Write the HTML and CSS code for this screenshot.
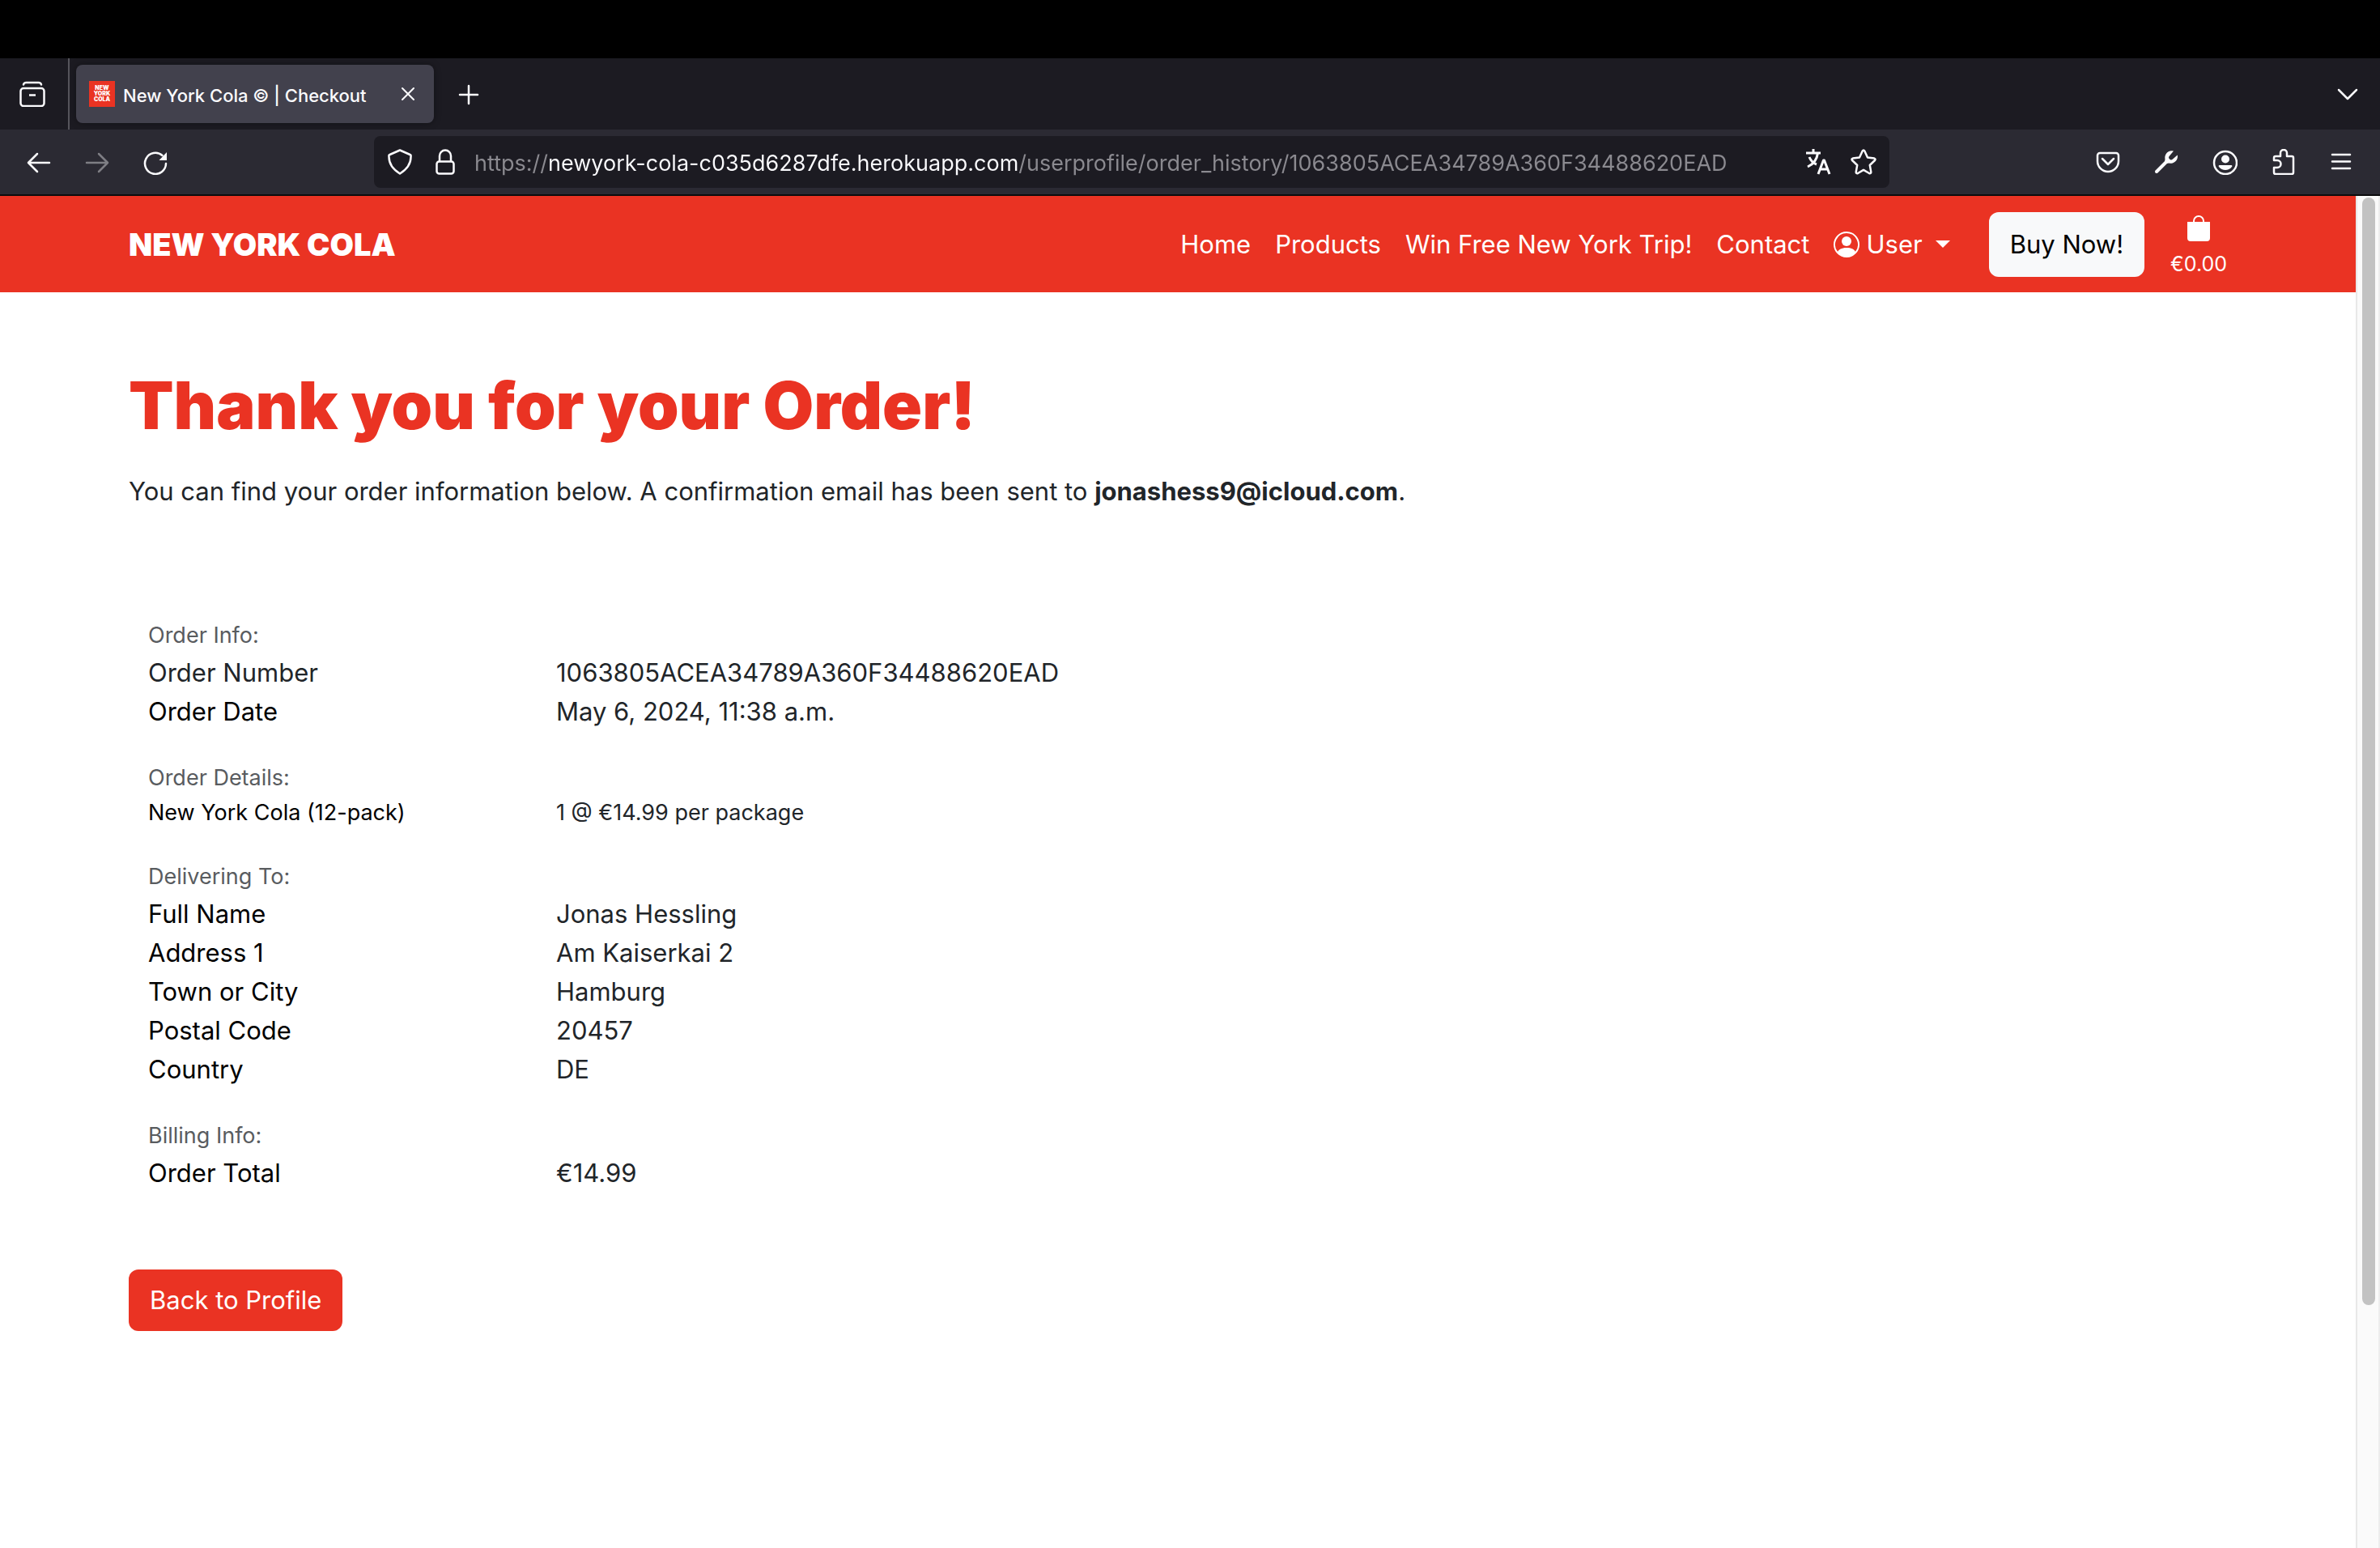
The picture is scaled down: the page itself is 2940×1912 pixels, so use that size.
FILE: index.html
```html
<!DOCTYPE html>
<html lang="en">
<head>
<meta charset="utf-8">
<meta name="viewport" content="width=device-width, initial-scale=1">
<title>New York Cola © | Checkout</title>
<link rel="stylesheet" href="styles.css">
</head>
<body>
<div class="menu-strip"></div>

<header class="tab-strip">
  <button class="icon-btn history-btn" aria-label="Recent browsing">
    <svg class="icon" viewBox="0 0 32 32"><path d="M5 4.500Q5.500 2 8.500 2H23.500Q26.500 2 27 4.500"/><rect x="1.500" y="9" width="29" height="22" rx="3.500"/><path d="M12 17.500h8" stroke-linecap="butt"/></svg>
  </button>
  <div class="tab">
    <svg class="favicon" viewBox="0 0 32 32"><rect width="32" height="32" fill="#ea3323"/><text x="16" y="11">NEW</text><text x="16" y="18">YORK</text><text x="16" y="25">COLA</text></svg>
    <span class="tab-title">New York Cola © | Checkout</span>
    <button class="icon-btn tab-close" aria-label="Close tab">
      <svg class="icon" viewBox="0 0 32 32"><path d="M9 9l14 14M23 9L9 23" stroke-width="2"/></svg>
    </button>
  </div>
  <button class="icon-btn new-tab" aria-label="New tab">
    <svg class="icon" viewBox="0 0 32 32"><path d="M16 6v22M5 17h22"/></svg>
  </button>
  <button class="icon-btn list-tabs" aria-label="List all tabs">
    <svg class="icon" viewBox="0 0 32 32"><path d="M5 11l11 11 11-11"/></svg>
  </button>
</header>

<div class="toolbar">
  <div class="nav-buttons">
    <button class="icon-btn" aria-label="Back"><svg class="icon" viewBox="0 0 32 32"><path d="M29 17H3M14 6L3 17l11 11"/></svg></button>
    <button class="icon-btn" aria-label="Forward" disabled><svg class="icon" viewBox="0 0 32 32"><path d="M3 17h26M18 6l11 11-11 11"/></svg></button>
    <button class="icon-btn" aria-label="Reload"><svg class="icon" viewBox="0 0 32 32"><path d="M24.500 8A13 13 0 1 0 29 18"/><path d="M30 4v9.500q0 .5-.5.500H20.500z" fill="currentColor" stroke="none"/></svg></button>
  </div>
  <div class="url-bar">
    <div class="url-icons">
      <button class="icon-btn" aria-label="Tracking protection"><svg class="icon" viewBox="0 0 32 32"><path d="M16 1.500L28.500 7Q30 7.500 29.500 10Q29.500 22 16 30.500Q2.500 22 2.500 10Q2 7.500 3.500 7Z"/></svg></button>
      <button class="icon-btn" aria-label="Site information"><svg class="icon" viewBox="0 0 32 32"><rect x="5.500" y="15.500" width="21" height="15" rx="3"/><path d="M9 15V8.500a7 7 0 0 1 14 0V15"/></svg></button>
    </div>
    <input class="url-input" type="text" aria-label="Address" value="https://newyork-cola-c035d6287dfe.herokuapp.com/userprofile/order_history/1063805ACEA34789A360F34488620EAD">
    <div class="url-icons">
      <button class="icon-btn" aria-label="Translate page"><svg class="icon" viewBox="0 0 32 32"><path d="M1 5h18M10 0v5M3 22Q14 17 15.500 5M5 10Q8 17 14 19M16 31l6.500-17h1L30 31M18.500 25h9" stroke-linecap="butt" stroke-width="3"/></svg></button>
      <button class="icon-btn" aria-label="Bookmark page"><svg class="icon" viewBox="0 0 32 32"><path d="M14.700 2.500q1.300-2 2.600 0l3.700 8 8.300 1.100q2 .7.700 2.400l-6.200 6 1.500 8.600q-.2 2.200-2.300 1.400L16 25.900 9 30q-2.100.8-2.300-1.400L8.200 20 2 14q-1.300-1.700.7-2.400L11 10.500z"/></svg></button>
    </div>
  </div>
  <div class="tool-buttons">
    <button class="icon-btn" aria-label="Save to Pocket"><svg class="icon" viewBox="0 0 32 32"><path d="M6 5h20a3 3 0 0 1 3 3v7a13 13 0 0 1-26 0V8a3 3 0 0 1 3-3z"/><path d="M9 12l7 7 7-7"/></svg></button>
    <button class="icon-btn" aria-label="Developer tools"><svg class="icon" viewBox="0 0 32 32"><path d="M4 28L18 14" stroke-width="4"/><path d="M25 2.500A8.500 8.500 0 0 0 14.500 12.500L14 16l2 2 3.500-.5A8.500 8.500 0 0 0 29.800 7.500L24 12.500a2.500 2.500 0 0 1-4-4z" fill="currentColor" stroke="none"/></svg></button>
    <button class="icon-btn" aria-label="Account"><svg class="icon" viewBox="0 0 32 32"><circle cx="17" cy="17" r="14"/><circle cx="17" cy="12.500" r="5" fill="currentColor" stroke="none"/><path d="M9.500 20h15q1.500.5.500 2a10 10 0 0 1-16 0q-1-1.500.500-2z" fill="currentColor" stroke="none"/></svg></button>
    <button class="icon-btn" aria-label="Extensions"><svg class="icon" viewBox="0 0 32 32"><path d="M5 14v-3a2 2 0 0 1 2-2h6V5a4 4 0 0 1 8 0v4h6a2 2 0 0 1 2 2v18a2 2 0 0 1-2 2H7a2 2 0 0 1-2-2v-6h4a4.500 4.500 0 0 0 0-9z"/></svg></button>
    <button class="icon-btn" aria-label="Application menu"><svg class="icon" viewBox="0 0 32 32"><path d="M5 7h22M5 15.500h22M5 24h22"/></svg></button>
  </div>
</div>

<div class="viewport">
  <div class="site">
    <nav class="navbar">
      <div class="container navbar-inner">
        <a class="brand" href="#">NEW YORK COLA</a>
        <div class="links">
          <a href="#">Home</a>
          <a href="#">Products</a>
          <a href="#">Win Free New York Trip!</a>
          <a href="#">Contact</a>
          <a class="user-link" href="#"><svg class="user-icon" viewBox="0 0 16 16"><path d="M11 6a3 3 0 1 1-6 0 3 3 0 0 1 6 0"/><path fill-rule="evenodd" d="M0 8a8 8 0 1 1 16 0A8 8 0 0 1 0 8m8-7a7 7 0 0 0-5.468 11.370C3.242 11.226 4.805 10 8 10s4.757 1.225 5.468 2.370A7 7 0 0 0 8 1"/></svg>User<span class="caret"></span></a>
        </div>
        <button class="buy-btn">Buy Now!</button>
        <a class="cart" href="#" aria-label="Shopping bag">
          <svg class="bag-icon" viewBox="0 0 16 16"><path d="M8 1a2.500 2.500 0 0 1 2.500 2.500V4h-5v-.5A2.500 2.500 0 0 1 8 1m3.500 3v-.5a3.500 3.500 0 1 0-7 0V4H1v10a2 2 0 0 0 2 2h10a2 2 0 0 0 2-2V4z"/></svg>
          <span>€0.00</span>
        </a>
      </div>
    </nav>

    <main class="container content">
      <h1>Thank you for your Order!</h1>
      <p class="lead">You can find your order information below. A confirmation email has been sent to <strong>jonashess9@icloud.com</strong>.</p>

      <div class="order">
        <section>
          <h2><small>Order Info:</small></h2>
          <dl>
            <dt class="muted-dark">Order Number</dt><dd>1063805ACEA34789A360F34488620EAD</dd>
            <dt>Order Date</dt><dd>May 6, 2024, 11:38 a.m.</dd>
          </dl>
        </section>
        <section>
          <h2><small>Order Details:</small></h2>
          <dl class="small">
            <dt>New York Cola (12-pack)</dt><dd>1 @ €14.99 per package</dd>
          </dl>
        </section>
        <section>
          <h2><small>Delivering To:</small></h2>
          <dl>
            <dt>Full Name</dt><dd>Jonas Hessling</dd>
            <dt>Address 1</dt><dd>Am Kaiserkai 2</dd>
            <dt>Town or City</dt><dd>Hamburg</dd>
            <dt>Postal Code</dt><dd>20457</dd>
            <dt>Country</dt><dd>DE</dd>
          </dl>
        </section>
        <section>
          <h2><small>Billing Info:</small></h2>
          <dl>
            <dt>Order Total</dt><dd>€14.99</dd>
          </dl>
        </section>
      </div>

      <a class="back-btn" href="#">Back to Profile</a>
    </main>
  </div>
  <div class="scrollbar"><div class="thumb"></div></div>
</div>
</body>
</html>
```
FILE: styles.css
```css
:root {
  --red: #ea3323;
  --chrome-dark: #1c1b22;
  --chrome: #2b2a33;
  --chrome-text: #fbfbfe;
  --ink: #212529;
}

* { box-sizing: border-box; }

body {
  margin: 0;
  min-height: 100vh;
  display: flex;
  flex-direction: column;
  background: #fff;
  color: var(--ink);
  font-family: Inter, "Liberation Sans", sans-serif;
  font-size: 31px;
  line-height: 48px;
}

a { color: inherit; text-decoration: none; }
button, input { font: inherit; }

/* Browser window */
.menu-strip { height: 72px; background: #000; }

.icon-btn {
  display: flex;
  flex: none;
  padding: 0;
  border: 0;
  background: none;
  color: var(--chrome-text);
}
.icon-btn:disabled { opacity: 0.4; }

.icon {
  width: 32px;
  height: 32px;
  fill: none;
  stroke: currentColor;
  stroke-width: 2.5;
  stroke-linecap: round;
  stroke-linejoin: round;
}

.tab-strip {
  display: flex;
  align-items: center;
  height: 88px;
  padding-right: 24px;
  background: var(--chrome-dark);
}
.history-btn {
  align-self: stretch;
  align-items: center;
  padding: 0 28px 0 24px;
  border-right: 2px solid #56555c;
}
.tab {
  display: flex;
  align-items: center;
  width: 442px;
  height: 72px;
  margin-left: 8px;
  padding: 0 16px;
  border-radius: 8px;
  background: #42414d;
  box-shadow: 0 0 8px rgba(0, 0, 0, 0.4);
}
.favicon { flex: none; width: 32px; height: 32px; }
.favicon text {
  fill: #fff;
  font-size: 7px;
  font-weight: 900;
  text-anchor: middle;
}
.tab-title {
  flex: 1;
  margin-left: 10px;
  padding-top: 3px;
  color: var(--chrome-text);
  font-size: 22px;
  font-weight: 500;
  white-space: nowrap;
}
.new-tab { margin-left: 27px; }
.list-tabs { margin-left: auto; }

.toolbar {
  display: flex;
  align-items: center;
  height: 82px;
  padding: 0 32px;
  border-bottom: 2px solid #0c0c0d;
  background: var(--chrome);
}
.nav-buttons, .tool-buttons { display: flex; gap: 40px; }
.tool-buttons { margin-left: auto; }
.url-bar {
  display: flex;
  align-items: center;
  gap: 20px;
  width: 1872px;
  height: 64px;
  margin-left: 254px;
  padding: 0 16px;
  border-radius: 8px;
  background: var(--chrome-dark);
}
.url-icons { display: flex; gap: 24px; }
/* The host name is brighter than the scheme and the path. */
.url-input {
  flex: 1;
  min-width: 0;
  padding: 3px 0 0;
  border: 0;
  outline: 0;
  color: var(--chrome-text);
  font-size: 27px;
  background: linear-gradient(90deg, #8b8a90 91px, #fbfbfe 91px, #fbfbfe 673px, #8b8a90 673px);
  -webkit-background-clip: text;
  background-clip: text;
  -webkit-text-fill-color: transparent;
}

/* Page */
.viewport { flex: 1; display: flex; }
.site { flex: 1; background: #fff; }
.scrollbar {
  width: 30px;
  padding: 2px 4px 0 6px;
  border-left: 2px solid #e8e8e8;
  border-right: 2px solid #ededed;
  background: #fafafa;
}
.thumb { height: 82%; border-radius: 8px; background: #c2c2c2; }

.container {
  max-width: 2640px;
  margin: 0 auto;
  padding: 0 24px;
}
.navbar { background: var(--red); color: #fff; }
.navbar-inner {
  display: flex;
  align-items: center;
  height: 119px;
}
.brand { font-size: 38px; font-weight: 900; }
.links {
  display: flex;
  gap: 30px;
  margin-left: auto;
}
.user-link { display: flex; align-items: center; }
.user-icon { width: 32px; height: 32px; margin-right: 8px; fill: currentColor; }
.caret {
  margin-left: 16px;
  border-top: 9px solid;
  border-left: 9px solid transparent;
  border-right: 9px solid transparent;
}
.buy-btn {
  height: 80px;
  margin: 0 32px 0 48px;
  padding: 0 26px;
  border: 0;
  border-radius: 12px;
  background: #f8f9fa;
  color: #000;
}
.cart {
  display: flex;
  flex-direction: column;
  align-items: center;
  padding-top: 8px;
  font-size: 25px;
  line-height: 40px;
}
.bag-icon { width: 32px; height: 32px; margin-bottom: 8px; fill: currentColor; }

.content { padding-top: 92px; padding-bottom: 96px; }
h1 {
  margin: 0;
  color: var(--red);
  font-size: 81px;
  font-weight: 900;
  line-height: 96px;
}
.lead { margin: 34px 0 128px; }
.order {
  display: grid;
  gap: 32px;
  max-width: 1560px;
  padding: 0 24px;
}
h2 {
  height: 48px;
  margin: 0;
  color: #595c5f;
  font-size: 31px;
  font-weight: 400;
}
h2 small { font-size: 27px; }
dl {
  display: grid;
  grid-template-columns: 1fr 2fr;
  margin: 0;
}
dt { color: #000; }
.muted-dark, dd { color: var(--ink); }
dd { margin: 0; }
.small { font-size: 27px; line-height: 42px; }
.back-btn {
  display: inline-block;
  margin-top: 95px;
  padding: 14px 26px;
  border-radius: 12px;
  background: var(--red);
  color: #fff;
}
```
